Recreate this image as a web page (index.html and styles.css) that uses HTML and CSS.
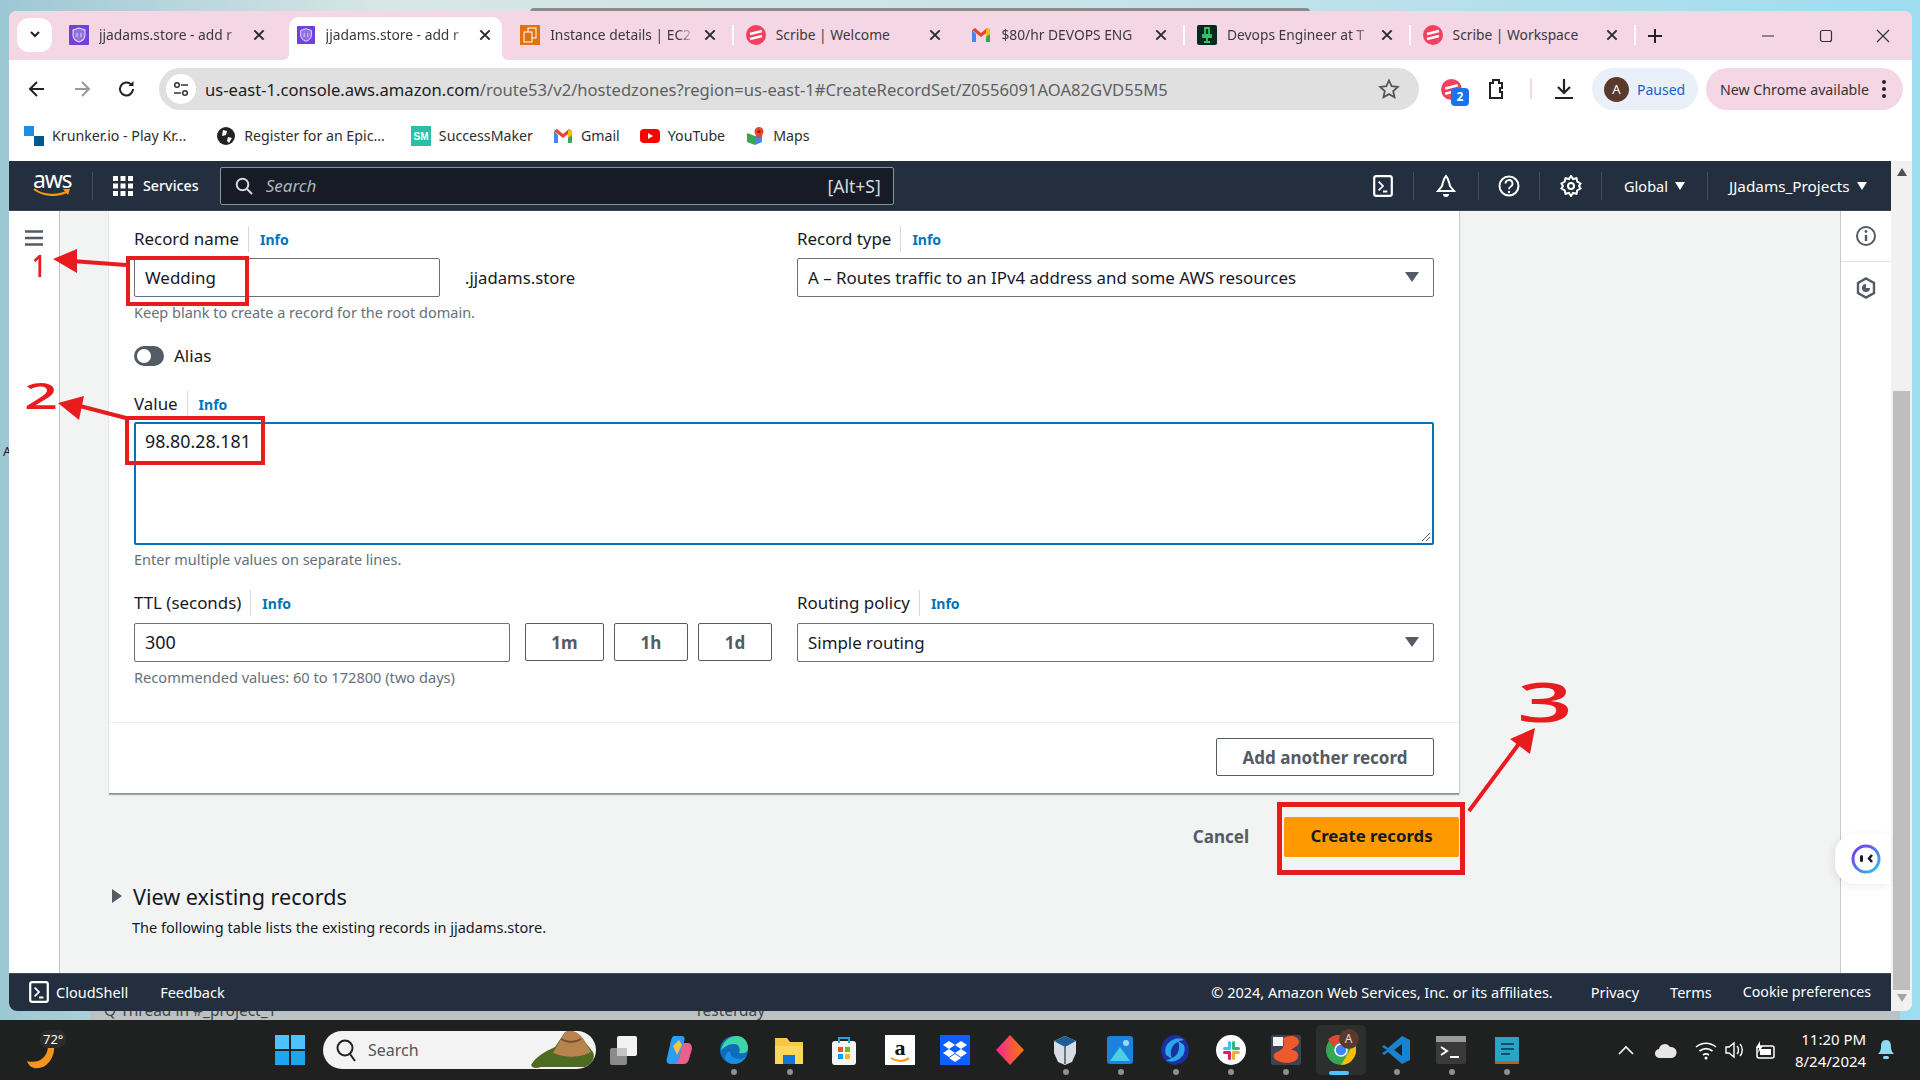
FILE: index.html
```html
<!DOCTYPE html>
<html>
<head>
    <title>Route 53 - Create record</title>
    <link rel="stylesheet" href="styles.css">
</head>
<body>
    <svg class="defs" width="0" height="0">
        <symbol id="route53" viewBox="0 0 20 20"><rect width="20" height="20" rx="1" fill="#6f42d8"/><path d="M10 3l6 2v5c0 4-3 6-6 7-3-1-6-3-6-7V5z" fill="#fff" fill-opacity="0.25" stroke="#e4d8fb" stroke-width="1.100"/><path d="M8 8v4M12 8v4" stroke="#e4d8fb" stroke-width="1"/></symbol>
        <symbol id="scribe" viewBox="0 0 20 20"><circle cx="10" cy="10" r="10" fill="#f43f5e"/><path d="M4 9l12-3M4 14l12-3" stroke="#fff" stroke-width="2.400"/></symbol>
        <symbol id="gmail" viewBox="0 0 20 20"><path d="M1 5v12h4V9z" fill="#4285f4"/><path d="M19 5v12h-4V9z" fill="#34a853"/><path d="M1 5l3-2 6 5 6-5 3 2-9 7z" fill="#ea4335"/><path d="M16 3l3 2v4l-4 3V5z" fill="#fbbc04"/></symbol>
        <symbol id="close" viewBox="0 0 12 12"><path d="M2 2l8 8M10 2l-8 8" stroke="#2b2b2b" stroke-width="1.700"/></symbol>
        <symbol id="caret" viewBox="0 0 10 8"><path d="M0 0h10L5 8z" fill="currentColor"/></symbol>
        <symbol id="shell" viewBox="0 0 20 20"><rect x="2" y="1" width="16" height="18" rx="2" fill="none" stroke="currentColor" stroke-width="2"/><path d="M6 6l4 4-4 4M10 15h4" fill="none" stroke="currentColor" stroke-width="1.600"/></symbol>
    </svg>

    <div class="behind behind-top"></div>
    <div class="behind behind-bottom"><span>Q Thread in #_project_1</span><span class="behind-date">Yesterday</span></div>
    <span class="edge-letter">A</span>

    <div class="desktop">
        <div class="window">
            <div class="tabstrip">
                <div class="tab-search"><svg width="14" height="10" viewBox="0 0 14 10"><path d="M3 2l4 4 4-4" fill="none" stroke="#222" stroke-width="2"/></svg></div>
                <div class="tab">
                    <svg class="favicon"><use href="#route53"/></svg>
                    <span class="tab-title fade">jjadams.store - add r</span>
                    <svg class="tab-close"><use href="#close"/></svg>
                </div>
                <div class="tab tab-active">
                    <svg class="favicon favicon-small"><use href="#route53"/></svg>
                    <span class="tab-title fade">jjadams.store - add r</span>
                    <svg class="tab-close"><use href="#close"/></svg>
                </div>
                <div class="tab tab-sep">
                    <svg class="favicon" viewBox="0 0 20 20"><rect width="20" height="20" fill="#e0720f"/><rect x="8" y="3" width="8" height="10" fill="none" stroke="#fff"/><rect x="4" y="7" width="8" height="10" fill="#e0720f" stroke="#fff"/></svg>
                    <span class="tab-title fade">Instance details | EC2</span>
                    <svg class="tab-close"><use href="#close"/></svg>
                </div>
                <div class="tab">
                    <svg class="favicon"><use href="#scribe"/></svg>
                    <span class="tab-title">Scribe | Welcome</span>
                    <svg class="tab-close"><use href="#close"/></svg>
                </div>
                <div class="tab tab-sep">
                    <svg class="favicon"><use href="#gmail"/></svg>
                    <span class="tab-title fade">$80/hr DEVOPS ENG</span>
                    <svg class="tab-close"><use href="#close"/></svg>
                </div>
                <div class="tab tab-sep">
                    <svg class="favicon" viewBox="0 0 20 20"><rect width="20" height="20" rx="2" fill="#06281f"/><path d="M8 3h4v7H8zM6 9v3h8V9M10 12v4M7 17h6" fill="none" stroke="#34c76a" stroke-width="1.800"/></svg>
                    <span class="tab-title fade">Devops Engineer at T</span>
                    <svg class="tab-close"><use href="#close"/></svg>
                </div>
                <div class="tab tab-sep">
                    <svg class="favicon"><use href="#scribe"/></svg>
                    <span class="tab-title">Scribe | Workspace</span>
                    <svg class="tab-close"><use href="#close"/></svg>
                </div>
                <svg class="new-tab" viewBox="0 0 16 16"><path d="M8 1v14M1 8h14" stroke="#222" stroke-width="2"/></svg>
                <div class="win-controls">
                    <div class="win-btn"><svg width="14" height="14" viewBox="0 0 14 14"><path d="M1 7h12" stroke="#333" stroke-width="1.200"/></svg></div>
                    <div class="win-btn"><svg width="14" height="14" viewBox="0 0 14 14"><rect x="1.500" y="1.500" width="11" height="11" rx="2" fill="none" stroke="#333" stroke-width="1.200"/></svg></div>
                    <div class="win-btn"><svg width="14" height="14" viewBox="0 0 14 14"><path d="M1 1l12 12M13 1L1 13" stroke="#333" stroke-width="1.200"/></svg></div>
                </div>
            </div>

            <div class="toolbar">
                <div class="nav-btn"><svg width="20" height="20" viewBox="0 0 20 20"><path d="M17 10H4M10 3l-7 7 7 7" fill="none" stroke="#222" stroke-width="2"/></svg></div>
                <div class="nav-btn"><svg width="20" height="20" viewBox="0 0 20 20"><path d="M3 10h13M10 3l7 7-7 7" fill="none" stroke="#9a9a9a" stroke-width="2"/></svg></div>
                <div class="nav-btn"><svg width="20" height="20" viewBox="0 0 20 20"><path d="M16 10a6.500 6.500 0 1 1-2-4.700" fill="none" stroke="#222" stroke-width="2"/><path d="M16.500 2v5h-5z" fill="#222"/></svg></div>
                <div class="omnibox">
                    <div class="site-info"><svg width="18" height="18" viewBox="0 0 18 18"><circle cx="5" cy="5" r="2.300" fill="none" stroke="#333" stroke-width="1.500"/><path d="M9 5h7M2 13h7" stroke="#333" stroke-width="1.500"/><circle cx="13" cy="13" r="2.300" fill="none" stroke="#333" stroke-width="1.500"/></svg></div>
                    <span class="url"><span class="url-host">us-east-1.console.aws.amazon.com</span>/route53/v2/hostedzones?region=us-east-1#CreateRecordSet/Z0556091AOA82GVD55M5</span>
                    <svg class="star" width="22" height="22" viewBox="0 0 22 22"><path d="M11 2.500l2.600 5.700 6.200.700-4.600 4.200 1.300 6.100-5.500-3.100-5.500 3.100 1.300-6.100-4.600-4.200 6.200-.700z" fill="none" stroke="#555" stroke-width="1.800"/></svg>
                </div>
                <div class="ext-scribe">
                    <svg width="21" height="21"><use href="#scribe"/></svg>
                    <span class="ext-badge">2</span>
                </div>
                <svg class="ext-puzzle" width="24" height="24" viewBox="0 0 24 24"><path d="M6 6h3V3h6v3h3v5h-2v4h2v6H6z" fill="none" stroke="#222" stroke-width="2"/></svg>
                <div class="tool-sep"></div>
                <svg class="ext-download" width="24" height="24" viewBox="0 0 24 24"><path d="M12 2v14M6 10l6 6 6-6M3 21h18" fill="none" stroke="#222" stroke-width="2.200"/></svg>
                <div class="profile-pill"><span class="avatar">A</span><span>Paused</span></div>
                <div class="update-pill"><span>New Chrome available</span><span class="kebab"><i></i><i></i><i></i></span></div>
            </div>

            <div class="bookmarks">
                <div class="bookmark bm-first"><svg class="bm-icon" viewBox="0 0 20 20"><rect width="10" height="10" fill="#1b8fe2"/><rect x="10" y="10" width="10" height="10" fill="#02588c"/></svg>Krunker.io - Play Kr...</div>
                <div class="bookmark bm-second"><svg class="bm-icon" viewBox="0 0 20 20"><circle cx="10" cy="10" r="9" fill="#222"/><path d="M7 4l4 1-1 4-4 1zM12 11l4 1-3 5-2-2z" fill="#fff"/></svg>Register for an Epic...</div>
                <div class="bookmark"><svg class="bm-icon" viewBox="0 0 20 20"><rect width="20" height="20" fill="#2bbfa8"/><text x="10" y="14" font-size="10" font-weight="700" fill="#fff" text-anchor="middle" font-family="Liberation Sans, sans-serif">SM</text></svg>SuccessMaker</div>
                <div class="bookmark"><svg class="bm-icon"><use href="#gmail"/></svg>Gmail</div>
                <div class="bookmark"><svg class="bm-icon" viewBox="0 0 20 20"><rect y="3" width="20" height="14" rx="4" fill="#f00"/><path d="M8 7l5 3-5 3z" fill="#fff"/></svg>YouTube</div>
                <div class="bookmark"><svg class="bm-icon" viewBox="0 0 20 20"><path d="M2 7l8 3v9l-8-3z" fill="#34a853"/><path d="M10 10l7-3v9l-7 3z" fill="#4285f4"/><path d="M14 1a4.500 4.500 0 0 1 4.500 4.500C18.500 8.500 14 13 14 13S9.500 8.500 9.500 5.500A4.500 4.500 0 0 1 14 1z" fill="#ea4335"/><circle cx="14" cy="5.500" r="1.600" fill="#8e1d14"/></svg>Maps</div>
            </div>

            <div class="page">
                <div class="console">
                    <div class="topnav">
                        <div class="aws-logo">
                            <span class="aws-word">aws</span>
                            <svg width="38" height="10" viewBox="0 0 38 10"><path d="M1 1c9 7 24 8 34 2" fill="none" stroke="#f90" stroke-width="2.200"/><path d="M30 1l7 0-2 6z" fill="#f90"/></svg>
                        </div>
                        <div class="nav-divider"></div>
                        <svg class="grid-icon" width="20" height="20" viewBox="0 0 20 20" fill="#fff"><rect width="5" height="5"/><rect x="7.500" width="5" height="5"/><rect x="15" width="5" height="5"/><rect y="7.500" width="5" height="5"/><rect x="7.500" y="7.500" width="5" height="5"/><rect x="15" y="7.500" width="5" height="5"/><rect y="15" width="5" height="5"/><rect x="7.500" y="15" width="5" height="5"/><rect x="15" y="15" width="5" height="5"/></svg>
                        <span class="services">Services</span>
                        <div class="nav-search">
                            <svg width="18" height="18" viewBox="0 0 18 18"><circle cx="7.500" cy="7.500" r="5.800" fill="none" stroke="#d5dbdb" stroke-width="2"/><path d="M12 12l5 5" stroke="#d5dbdb" stroke-width="2"/></svg>
                            <span class="nav-search-text">Search</span>
                            <span class="nav-search-key">[Alt+S]</span>
                        </div>
                        <div class="nav-right">
                            <div class="nav-cell cell-shell"><svg width="22" height="22"><use href="#shell"/></svg></div>
                            <div class="nav-cell cell-bell"><svg width="22" height="24" viewBox="0 0 22 24"><path d="M11 2c-3 3-3 7-4 10l-4 5h16l-4-5c-1-3-1-7-4-10z" fill="none" stroke="#fff" stroke-width="2"/><path d="M8 20a3 3 0 0 0 6 0z" fill="#fff"/></svg></div>
                            <div class="nav-cell cell-help"><svg width="22" height="22" viewBox="0 0 22 22"><circle cx="11" cy="11" r="9.500" fill="none" stroke="#fff" stroke-width="2"/><path d="M7.500 8.500a3.500 3.500 0 1 1 5 3.200c-1 .6-1.500 1-1.500 2.500" fill="none" stroke="#fff" stroke-width="1.800"/><circle cx="11" cy="17" r="1.200" fill="#fff"/></svg></div>
                            <div class="nav-cell cell-gear"><svg width="22" height="22" viewBox="0 0 22 22"><path d="M11 1l2 3 3.500-.8.800 3.500 3.200 1.800L19 11l1.500 2.500-3.200 1.800-.8 3.500L13 18l-2 3-2-3-3.500.8-.8-3.500-3.200-1.800L3 11 1.500 8.500l3.200-1.800.8-3.500L9 4z" fill="none" stroke="#fff" stroke-width="2"/><circle cx="11" cy="11" r="3" fill="none" stroke="#fff" stroke-width="2"/></svg></div>
                            <div class="nav-cell cell-global">Global<svg class="nav-caret"><use href="#caret"/></svg></div>
                            <div class="nav-cell cell-account">JJadams_Projects<svg class="nav-caret"><use href="#caret"/></svg></div>
                        </div>
                    </div>

                    <div class="console-body">
                        <aside class="side">
                            <svg width="18" height="16" viewBox="0 0 18 16"><path d="M0 1.500h18M0 8h18M0 14.500h18" stroke="#545b64" stroke-width="2.600"/></svg>
                        </aside>

                        <main class="main">
                            <section class="card">
                                <div class="card-body">
                                    <div class="form-row">
                                        <div>
                                            <div class="label-row"><label class="field-label">Record name</label><a class="info">Info</a></div>
                                            <div class="name-row">
                                                <div class="text-input name-input">Wedding</div>
                                                <span class="suffix">.jjadams.store</span>
                                            </div>
                                            <p class="hint">Keep blank to create a record for the root domain.</p>
                                        </div>
                                        <div>
                                            <div class="label-row"><label class="field-label">Record type</label><a class="info">Info</a></div>
                                            <div class="text-input select-input">A – Routes traffic to an IPv4 address and some AWS resources</div>
                                        </div>
                                    </div>

                                    <div class="alias-row">
                                        <span class="toggle"></span>
                                        <span class="alias-text">Alias</span>
                                    </div>

                                    <div class="label-row value-label"><label class="field-label">Value</label><a class="info">Info</a></div>
                                    <div class="value-box">98.80.28.181<svg class="resize-grip" width="10" height="10" viewBox="0 0 10 10"><path d="M1 9l8-8M5 9l4-4" stroke="#545b64" stroke-width="1"/></svg></div>
                                    <p class="hint hint-value">Enter multiple values on separate lines.</p>

                                    <div class="form-row ttl-row">
                                        <div>
                                            <div class="label-row ttl-label"><label class="field-label">TTL (seconds)</label><a class="info">Info</a></div>
                                            <div class="ttl-inputs">
                                                <div class="text-input ttl-input">300</div>
                                                <button class="ttl-btn btn-1m">1m</button>
                                                <button class="ttl-btn">1h</button>
                                                <button class="ttl-btn">1d</button>
                                            </div>
                                            <p class="hint hint-ttl">Recommended values: 60 to 172800 (two days)</p>
                                        </div>
                                        <div>
                                            <div class="label-row ttl-label"><label class="field-label">Routing policy</label><a class="info">Info</a></div>
                                            <div class="text-input select-input">Simple routing</div>
                                        </div>
                                    </div>
                                </div>
                                <div class="card-footer">
                                    <button class="btn-outline">Add another record</button>
                                </div>
                            </section>

                            <div class="actions">
                                <a class="cancel">Cancel</a>
                                <button class="btn-primary">Create records</button>
                            </div>

                            <div class="existing-head">
                                <svg width="12" height="14" viewBox="0 0 12 14"><path d="M1 0l10 7-10 7z" fill="#545b64"/></svg>
                                <h2>View existing records</h2>
                            </div>
                            <p class="existing-text">The following table lists the existing records in jjadams.store.</p>
                        </main>

                        <aside class="rail">
                            <div class="rail-item"><svg width="22" height="22" viewBox="0 0 22 22"><circle cx="11" cy="11" r="9" fill="none" stroke="#545b64" stroke-width="2"/><path d="M11 10v6" stroke="#545b64" stroke-width="2.400"/><circle cx="11" cy="6.500" r="1.400" fill="#545b64"/></svg></div>
                            <div class="rail-item"><svg width="20" height="22" viewBox="0 0 20 22"><path d="M10 1.500l8 4.500v10l-8 4.500L2 16V6z" fill="none" stroke="#545b64" stroke-width="2.400"/><path d="M10 7a4 4 0 1 0 4 4h-4z" fill="#545b64"/></svg></div>
                        </aside>
                    </div>

                    <footer class="console-footer">
                        <svg width="22" height="22"><use href="#shell"/></svg>
                        <span class="foot-shell">CloudShell</span>
                        <span class="foot-feedback">Feedback</span>
                        <span class="foot-copy">© 2024, Amazon Web Services, Inc. or its affiliates.</span>
                        <span class="foot-link foot-privacy">Privacy</span>
                        <span class="foot-link">Terms</span>
                        <span class="foot-link foot-cookie">Cookie preferences</span>
                    </footer>
                </div>

                <div class="scrollbar">
                    <svg class="scroll-up" width="10" height="8" viewBox="0 0 10 8"><path d="M5 0l5 8H0z" fill="#505050"/></svg>
                    <div class="scroll-thumb"></div>
                    <svg class="scroll-down" width="10" height="8" viewBox="0 0 10 8"><path d="M0 0h10L5 8z" fill="#a3a3a3"/></svg>
                </div>
            </div>
        </div>
    </div>

    <div class="taskbar">
        <div class="weather">
            <svg width="30" height="32" viewBox="0 0 30 32"><path d="M28 2c2 14-6 28-20 26-4-1-6-4-7-7 10 3 20-2 21-14z" fill="#f7941d"/></svg>
            <span class="temp">72°</span>
        </div>
        <svg class="start" width="30" height="30" viewBox="0 0 30 30"><rect width="14" height="14" fill="#4cc2ff"/><rect x="16" width="14" height="14" fill="#4cc2ff"/><rect y="16" width="14" height="14" fill="#1ea5ed"/><rect x="16" y="16" width="14" height="14" fill="#1ea5ed"/></svg>
        <div class="task-search">
            <svg width="22" height="24" viewBox="0 0 22 24"><circle cx="10" cy="10" r="7.500" fill="none" stroke="#222" stroke-width="2"/><path d="M15 16l5 7" stroke="#222" stroke-width="2"/></svg>
            <span>Search</span>
            <svg class="mountain" width="64" height="42" viewBox="0 0 64 42"><path d="M0 38c6-10 16-14 24-18L34 5c8-3 16 2 20 10l8 10c3 6-2 13-8 15H10C5 42 1 41 0 38z" fill="#4f6b22"/><path d="M22 26L34 5c8-3 16 2 20 10l6 10c-10 6-26 6-38 1z" fill="#b9834f"/><path d="M30 12c6 4 14 4 20 0" fill="none" stroke="#7a4f2a" stroke-width="2"/></svg>
        </div>
        <div class="task-icons">
            <div class="task-item"><svg viewBox="0 0 30 30"><rect x="8" y="1" width="20" height="20" rx="2" fill="#f2f2f2"/><rect x="1" y="13" width="17" height="17" rx="2" fill="#8a8a8a"/><rect x="8" y="13" width="10" height="8" fill="#c5c5c5"/></svg></div>
            <div class="task-item"><svg viewBox="0 0 30 30"><path d="M10 1h8c3 0 3 3 2 6l-6 20c-1 2-3 2-5 2H6c-3 0-4-3-3-6l3-13c1-5 2-9 4-9z" fill="#2a9df4"/><path d="M19 8h5c3 0 4 3 4 6l-3 10c-1 4-3 5-6 5h-8c2-1 3-3 4-6z" fill="#e9608e"/><path d="M9 11l6-6 3 5-5 10z" fill="#f6c445"/></svg></div>
            <div class="task-item has-dot"><svg viewBox="0 0 30 30"><circle cx="15" cy="15" r="14" fill="#0f6cbd"/><path d="M2 15C4 5 12 1 18 1c7 0 11 6 11 12 0 5-5 6-9 5 2-4 0-9-5-9-6 0-9 3-13 6z" fill="#3dd6a8"/><path d="M11 16c0 5 4 8 9 8 3 0 5-1 7-3-2 5-7 8-12 8-4 0-7-2-9-5 0-4 2-7 5-8z" fill="#1b8ee0"/></svg></div>
            <div class="task-item has-dot"><svg viewBox="0 0 30 30"><path d="M1 3h12l3 4h13v22H1z" fill="#f6c644"/><rect x="1" y="11" width="28" height="18" fill="#fbd75b"/><rect x="9" y="20" width="12" height="9" fill="#0f78d4"/></svg></div>
            <div class="task-item"><svg viewBox="0 0 30 30"><rect x="3" y="6" width="24" height="24" rx="3" fill="#f5f5f5"/><path d="M10 8V3h10v5" fill="none" stroke="#20a5e0" stroke-width="2"/><rect x="9" y="12" width="5" height="5" fill="#f25022"/><rect x="16" y="12" width="5" height="5" fill="#7fba00"/><rect x="9" y="19" width="5" height="5" fill="#00a4ef"/><rect x="16" y="19" width="5" height="5" fill="#ffb900"/></svg></div>
            <div class="task-item"><svg viewBox="0 0 30 30"><rect width="30" height="30" fill="#fff"/><text x="15" y="20" font-size="22" font-weight="700" fill="#111" text-anchor="middle" font-family="Liberation Serif, serif">a</text><path d="M6 23c6 4 13 4 18 0" fill="none" stroke="#f90" stroke-width="2"/></svg></div>
            <div class="task-item"><svg viewBox="0 0 30 30"><rect width="30" height="30" fill="#0d5fff"/><path d="M9 6l6 4-6 4-6-4zM21 6l6 4-6 4-6-4zM9 14l6 4-6 4-6-4zM21 14l6 4-6 4-6-4zM15 19l6 4-6 4-6-4z" fill="#fff"/></svg></div>
            <div class="task-item"><svg viewBox="0 0 30 30"><defs><linearGradient id="dia" x1="0" x2="1"><stop offset="0" stop-color="#f0259a"/><stop offset="1" stop-color="#ff7a00"/></linearGradient></defs><path d="M15 0l14 15-14 15L1 15z" fill="url(#dia)"/></svg></div>
            <div class="task-item has-dot"><svg viewBox="0 0 30 30"><path d="M15 1l11 5v12l-4 9-7 3-7-3-4-9V6z" fill="#d7dde3"/><path d="M15 1l11 5-11 6L4 6z" fill="#1d5d94"/><path d="M15 12v17" stroke="#6a7884" stroke-width="2"/></svg></div>
            <div class="task-item has-dot"><svg viewBox="0 0 30 30"><rect x="2" y="1" width="26" height="28" rx="3" fill="#1d82dc"/><path d="M5 26l10-14 10 14z" fill="#49d0e6"/><circle cx="21" cy="8" r="3" fill="#9ad8ff"/></svg></div>
            <div class="task-item has-dot"><svg viewBox="0 0 30 30"><ellipse cx="15" cy="15" rx="14" ry="15" fill="#1c2fa0"/><path d="M6 20C2 8 16 0 24 5 16 6 8 12 12 24zM24 10c4 12-10 20-18 15 8-1 16-7 12-19z" fill="#28a8ea"/></svg></div>
            <div class="task-item has-dot"><svg viewBox="0 0 30 30"><circle cx="15" cy="15" r="15" fill="#fff"/><rect x="7" y="12" width="8" height="3" rx="1.500" fill="#36c5f0"/><rect x="12" y="6" width="3" height="8" rx="1.500" fill="#36c5f0"/><rect x="16" y="12" width="8" height="3" rx="1.500" fill="#2eb67d"/><rect x="16" y="6" width="3" height="8" rx="1.500" fill="#2eb67d"/><rect x="16" y="16" width="8" height="3" rx="1.500" fill="#ecb22e"/><rect x="16" y="17" width="3" height="8" rx="1.500" fill="#ecb22e"/><rect x="7" y="16" width="8" height="3" rx="1.500" fill="#e01e5a"/><rect x="12" y="17" width="3" height="8" rx="1.500" fill="#e01e5a"/></svg></div>
            <div class="task-item has-dot"><svg viewBox="0 0 30 30"><rect x="0" y="0" width="30" height="30" rx="2" fill="#3c4352"/><path d="M12 3c8-4 16-2 16 4 0 4-6 6-8 8 4 0 8 2 7 7-1 6-14 8-22 3-4-3-3-7 3-9 4-2 6-5 4-13z" fill="#ee5a2c"/><rect x="2" y="2" width="10" height="9" fill="#f2f2f2"/></svg></div>
            <div class="task-item task-active"><svg viewBox="0 0 30 30"><circle cx="15" cy="15" r="15" fill="#34a853"/><path d="M15 0a15 15 0 0 1 13 7.500H15a7.500 7.500 0 0 0-7 5L2 4.500A15 15 0 0 1 15 0z" fill="#ea4335"/><path d="M28 7.500a15 15 0 0 1-13 22.500l6.500-11a7.500 7.500 0 0 0 0-11.500z" fill="#fbbc04"/><circle cx="15" cy="15" r="6" fill="#4285f4" stroke="#fff" stroke-width="1.500"/></svg><span class="chrome-badge">A</span></div>
            <div class="task-item has-dot"><svg viewBox="0 0 30 30"><path d="M21 1l8 4v20l-8 4L7 17l-4 3-2-2 5-3-5-3 2-2 4 3zM21 9l-8 6 8 6z" fill="#1684d0"/></svg></div>
            <div class="task-item has-dot"><svg viewBox="0 0 30 30"><rect y="1" width="30" height="28" rx="2" fill="#3a3a3a"/><rect y="1" width="30" height="6" fill="#9a9a9a"/><path d="M5 12l6 4-6 4" fill="none" stroke="#fff" stroke-width="2"/><path d="M14 22h9" stroke="#fff" stroke-width="2"/></svg></div>
            <div class="task-item has-dot"><svg viewBox="0 0 30 30"><rect x="3" y="2" width="24" height="26" fill="#27a5c8"/><rect x="3" y="26" width="24" height="3" fill="#b4622a"/><path d="M9 9h13M9 14h13M9 19h9" stroke="#0e4f66" stroke-width="2"/></svg></div>
        </div>
        <div class="tray">
            <svg width="16" height="10" viewBox="0 0 16 10"><path d="M1 9l7-7 7 7" fill="none" stroke="#fff" stroke-width="1.600"/></svg>
            <svg class="tray-cloud" width="22" height="18" viewBox="0 0 22 18"><path d="M5 17a4.500 4.500 0 0 1-1-9 6 6 0 0 1 11-2 5.500 5.500 0 0 1 2 11z" fill="#e6e6e6"/></svg>
            <svg class="tray-wifi" width="22" height="20" viewBox="0 0 22 20"><path d="M1 7c6-5 14-5 20 0M4.500 11c4-3 9-3 13 0M8 15c2-1.500 4-1.500 6 0" fill="none" stroke="#fff" stroke-width="1.600"/><circle cx="11" cy="18" r="1.500" fill="#fff"/></svg>
            <svg class="tray-vol" width="22" height="20" viewBox="0 0 22 20"><path d="M2 7h3l5-4v14l-5-4H2z" fill="none" stroke="#fff" stroke-width="1.400"/><path d="M13 6c2 2 2 6 0 8M16 4c3 3 3 9 0 12" fill="none" stroke="#fff" stroke-width="1.400"/></svg>
            <svg class="tray-batt" width="22" height="20" viewBox="0 0 22 20"><rect x="3" y="6" width="17" height="12" rx="2" fill="none" stroke="#fff" stroke-width="1.500"/><rect x="6" y="9" width="11" height="6" fill="#fff"/><path d="M6 1L2 8h3l-1 5 5-7H6z" fill="#fff"/></svg>
            <div class="clock"><span>11:20 PM</span><span>8/24/2024</span></div>
            <svg class="tray-bell" width="18" height="22" viewBox="0 0 18 22"><path d="M9 1c-4 0-5 3-5 7 0 3-1 5-3 7h16c-2-2-3-4-3-7 0-4-1-7-5-7z" fill="#8fdcf2"/><rect x="6" y="17" width="6" height="3" rx="1.500" fill="#8fdcf2"/></svg>
        </div>
    </div>

    <!-- red annotations drawn on top of the screenshot -->
    <svg class="marks" viewBox="0 0 1920 1080">
        <g fill="none" stroke="#e81c1f">
            <rect x="128" y="258" width="119" height="46" stroke-width="4"/>
            <rect x="127" y="418" width="136" height="45" stroke-width="4"/>
            <rect x="1279.500" y="804.500" width="183" height="68" stroke-width="5"/>
            <path d="M126 265l-54-4M126 418l-50-13M1469 811l52-70" stroke-width="4"/>
        </g>
        <g fill="#e81c1f">
            <path d="M53 259l24-10v24z"/>
            <path d="M58 403l26-7-5 24z"/>
            <path d="M1535 728l-25 11 20 15z"/>
        </g>
    </svg>
    <span class="digit digit-1">1</span>
    <span class="digit digit-2">2</span>
    <span class="digit digit-3">3</span>

    <div class="helper-tab">
        <svg width="30" height="30" viewBox="0 0 30 30"><defs><linearGradient id="ring" x1="0" y1="0" x2="1" y2="1"><stop offset="0" stop-color="#7b2ff7"/><stop offset="1" stop-color="#2bc4e8"/></linearGradient></defs><circle cx="15" cy="15" r="13" fill="#fff" stroke="url(#ring)" stroke-width="3"/><rect x="9" y="11" width="3" height="7" rx="1.500" fill="#16191f"/><path d="M21 11l-3 3.500 3 3.500" fill="none" stroke="#16191f" stroke-width="2.500"/></svg>
    </div>
</body>
</html>
```

FILE: styles.css
```css
* {
    box-sizing: border-box;
}
body {
    margin: 0;
    width: 1920px;
    height: 1080px;
    overflow: hidden;
    position: relative;
    font-family: "Noto Sans", sans-serif;
    color: #16191f;
    background: linear-gradient(90deg, #9cc8d4 0%, #d8e6e6 20%, #c6e2e8 60%, #9edcf0 100%);
}
.defs {
    position: absolute;
}
p {
    margin: 0;
}

/* desktop */
.desktop {
    height: 1020px;
    padding: 11px 8px 9px 9px;
    position: relative;
}
.behind {
    position: absolute;
    background: #bcc2c4;
}
.behind-top {
    left: 530px;
    top: 8px;
    width: 780px;
    height: 4px;
    background: #8c8c8c;
    border-radius: 4px 4px 0 0;
}
.behind-bottom {
    left: 90px;
    top: 1000px;
    width: 1810px;
    height: 20px;
    padding: 0 0 0 14px;
    font-size: 15.5px;
    line-height: 20px;
    color: #444;
    overflow: hidden;
}
.behind-date {
    margin-left: 418px;
}
.edge-letter {
    position: absolute;
    left: 3px;
    top: 442px;
    font-size: 13px;
    width: 6px;
    overflow: hidden;
}
.window {
    height: 1000px;
    display: flex;
    flex-direction: column;
    position: relative;
    background: #fff;
    border-radius: 8px;
    overflow: hidden;
}

/* tabs */
.tabstrip {
    height: 49px;
    flex: none;
    display: flex;
    align-items: flex-end;
    background: #f5d6e5;
}
.tab-search {
    width: 35px;
    height: 34px;
    margin: 0 7px 8px 8px;
    background: #fff;
    border-radius: 12px;
    display: flex;
    align-items: center;
    justify-content: center;
}
.tab {
    width: 225.6px;
    height: 43px;
    flex: none;
    display: flex;
    align-items: center;
    padding: 0 19px 8px 10px;
    position: relative;
}
.tab-sep::after {
    content: "";
    position: absolute;
    right: 2px;
    top: 8px;
    height: 20px;
    width: 2px;
    background: #fff;
}
.tab-active {
    width: 213px;
    margin: 0 8.6px 0 4px;
    padding: 0 10px 8px 8px;
    background: #fff;
    border-radius: 10px 10px 0 0;
}
.tab-active::before,
.tab-active::after {
    content: "";
    position: absolute;
    bottom: 0;
    width: 6px;
    height: 6px;
}
.tab-active::before {
    left: -6px;
    background: radial-gradient(circle at 0 0, transparent 6px, #fff 6px);
}
.tab-active::after {
    right: -6px;
    background: radial-gradient(circle at 100% 0, transparent 6px, #fff 6px);
}
.favicon {
    width: 20px;
    height: 20px;
    flex: none;
    margin-right: 10px;
}
.favicon-small {
    width: 18px;
    height: 20px;
    margin-right: 11px;
}
.tab-title {
    flex: 1;
    min-width: 0;
    margin-right: 8px;
    font-size: 13.8px;
    color: #3a3a3a;
    white-space: nowrap;
    overflow: hidden;
}
.fade {
    -webkit-mask-image: linear-gradient(90deg, #000 88%, transparent 100%);
    mask-image: linear-gradient(90deg, #000 88%, transparent 100%);
}
.tab-close {
    width: 14px;
    height: 14px;
    flex: none;
}
.new-tab {
    width: 16px;
    height: 16px;
    margin: 0 0 16px 9px;
    flex: none;
}
.win-controls {
    margin-left: auto;
    height: 100%;
    display: flex;
}
.win-btn {
    width: 57.5px;
    display: flex;
    align-items: center;
    justify-content: center;
}

/* toolbar */
.toolbar {
    height: 58px;
    flex: none;
    display: flex;
    align-items: center;
    padding: 0 0 0 5px;
}
.nav-btn {
    width: 45px;
    display: flex;
    justify-content: center;
}
.omnibox {
    width: 1260px;
    height: 42px;
    margin-left: 10px;
    background: #e0e0e0;
    border-radius: 21px;
    display: flex;
    align-items: center;
    padding: 0 19px 0 7px;
}
.site-info {
    width: 30px;
    height: 30px;
    background: #fff;
    border-radius: 50%;
    display: flex;
    align-items: center;
    justify-content: center;
    flex: none;
}
.url {
    margin-left: 9px;
    font-size: 16.6px;
    color: #5f5f5f;
    white-space: nowrap;
}
.url-host {
    color: #202020;
}
.star {
    margin-left: auto;
    flex: none;
}
.ext-scribe {
    position: relative;
    width: 28px;
    height: 30px;
    margin-left: 22px;
}
.ext-scribe svg {
    display: block;
    margin-top: 5px;
}
.ext-badge {
    position: absolute;
    right: 0;
    bottom: -2px;
    width: 18px;
    height: 18px;
    background: #1a73e8;
    color: #fff;
    border-radius: 4px;
    font-size: 12px;
    font-weight: 700;
    line-height: 18px;
    text-align: center;
}
.ext-puzzle {
    margin-left: 15px;
}
.tool-sep {
    width: 2px;
    height: 20px;
    margin-left: 22px;
    background: #f5d6e5;
}
.ext-download {
    margin-left: 20px;
}
.profile-pill {
    width: 106px;
    height: 42px;
    margin-left: 16px;
    padding-left: 12px;
    display: flex;
    align-items: center;
    gap: 8px;
    background: #e9f0f9;
    border-radius: 21px;
    font-size: 14px;
    color: #1a5fc8;
}
.avatar {
    width: 25px;
    height: 25px;
    background: #5b3a2e;
    color: #fff;
    border-radius: 50%;
    font-size: 13px;
    line-height: 25px;
    text-align: center;
}
.update-pill {
    width: 197px;
    height: 42px;
    margin-left: 8px;
    padding-left: 14px;
    display: flex;
    align-items: center;
    background: #f5d6e5;
    border-radius: 21px;
    font-size: 14.2px;
    color: #333;
    white-space: nowrap;
}
.kebab {
    margin-left: auto;
    margin-right: 17px;
    display: flex;
    flex-direction: column;
    gap: 3px;
}
.kebab i {
    width: 4px;
    height: 4px;
    background: #222;
    border-radius: 50%;
}

/* bookmarks */
.bookmarks {
    height: 43px;
    flex: none;
    display: flex;
    align-items: center;
    padding: 0 0 8px 15px;
    font-size: 14.2px;
    color: #2e2e2e;
}
.bookmark {
    display: flex;
    align-items: center;
    gap: 8px;
    white-space: nowrap;
    margin-right: 20px;
}
.bm-first {
    margin-right: 30px;
}
.bm-second {
    margin-right: 26px;
}
.bm-icon {
    width: 20px;
    height: 20px;
    flex: none;
}

/* console */
.page {
    flex: 1;
    min-height: 0;
    display: flex;
}
.console {
    flex: 1;
    min-width: 0;
    display: flex;
    flex-direction: column;
}
.topnav {
    height: 50px;
    flex: none;
    display: flex;
    align-items: center;
    padding-left: 24px;
    background: #232f3e;
    color: #fff;
    border-bottom: 1px solid #3b4552;
}
.aws-logo {
    width: 38px;
    margin-top: -4px;
    display: flex;
    flex-direction: column;
    line-height: 18px;
}
.aws-word {
    font-size: 23px;
    letter-spacing: -1.2px;
}
.nav-divider {
    width: 1px;
    height: 28px;
    margin-left: 21px;
    background: #414d5c;
}
.grid-icon {
    margin-left: 20px;
}
.services {
    margin-left: 10px;
    font-size: 14.3px;
    font-weight: 500;
}
.nav-search {
    width: 674px;
    height: 38px;
    margin-left: 21px;
    padding: 0 12px 0 14px;
    display: flex;
    align-items: center;
    background: #161b26;
    border: 1px solid #879596;
    border-radius: 2px;
}
.nav-search-text {
    margin-left: 13px;
    font-size: 17px;
    font-style: italic;
    color: #aab7b8;
}
.nav-search-key {
    margin-left: auto;
    font-size: 17.5px;
    color: #d5dbdb;
}
.nav-right {
    margin-left: auto;
    height: 100%;
    display: flex;
    align-items: center;
    font-size: 14.5px;
}
.nav-cell {
    height: 28px;
    display: flex;
    align-items: center;
    justify-content: center;
    border-right: 1px solid #414d5c;
}
.cell-shell { width: 61px; }
.cell-bell { width: 65px; }
.cell-help { width: 61px; }
.cell-gear { width: 62px; }
.cell-global { width: 106px; }
.cell-account {
    width: 183px;
    justify-content: flex-start;
    padding-left: 21px;
    border-right: none;
    font-size: 15.3px;
}
.nav-caret {
    width: 10px;
    height: 8px;
    margin-left: 7px;
    color: #fff;
}
.console-body {
    flex: 1;
    min-height: 0;
    display: flex;
}
.side {
    width: 51px;
    flex: none;
    padding: 18px 0 0 16px;
    background: #fff;
    border-right: 1px solid #bdc3c7;
}
.main {
    flex: 1;
    min-width: 0;
    padding-left: 49px;
    background: #f2f3f3;
    overflow: hidden;
}
.rail {
    width: 51px;
    flex: none;
    background: #fff;
    border-left: 1px solid #c6cacc;
}
.rail-item {
    height: 51px;
    display: flex;
    align-items: center;
    justify-content: center;
    border-bottom: 1px solid #dfe2e2;
}
.rail-item + .rail-item {
    border-bottom: none;
}

/* form card */
.card {
    width: 1350px;
    background: #fff;
    border-bottom: 1px solid #879596;
    box-shadow: 0 1px 1px rgba(0, 28, 36, 0.3), 1px 0 1px rgba(0, 28, 36, 0.12);
}
.card-body {
    padding: 18px 25px 36px 25px;
    border-bottom: 1px solid #eaeded;
}
.form-row {
    display: grid;
    grid-template-columns: 638px 637px;
    column-gap: 25px;
}
.label-row {
    height: 20px;
    margin-bottom: 9px;
    display: flex;
    align-items: center;
}
.field-label {
    padding-right: 9px;
    border-right: 1px solid #d5dbdb;
    font-size: 16.9px;
    line-height: 26px;
}
.info {
    margin-left: 11px;
    font-size: 14px;
    font-weight: 700;
    color: #0073bb;
}
.name-row {
    display: flex;
    align-items: center;
}
.text-input {
    height: 39px;
    padding: 0 10px 1px;
    display: flex;
    align-items: center;
    border: 1px solid #687078;
    border-radius: 2px;
    background: #fff;
    font-size: 16.9px;
}
.name-input {
    width: 306px;
}
.suffix {
    margin-left: 25px;
    font-size: 16.7px;
}
.select-input {
    position: relative;
}
.select-input::after {
    content: "";
    position: absolute;
    right: 14px;
    top: 13px;
    border-style: solid;
    border-width: 10px 7px 0;
    border-color: #545b64 transparent transparent;
}
.hint {
    margin-top: 6px;
    font-size: 14.5px;
    line-height: 18px;
    color: #687078;
}
.alias-row {
    height: 22px;
    margin-top: 24px;
    display: flex;
    align-items: center;
}
.toggle {
    width: 30px;
    height: 20px;
    padding: 3px;
    background: #545b64;
    border-radius: 10px;
}
.toggle::before {
    content: "";
    display: block;
    width: 14px;
    height: 14px;
    background: #fff;
    border-radius: 50%;
}
.alias-text {
    margin-left: 10px;
    margin-bottom: 1px;
    font-size: 17px;
}
.value-label {
    margin-top: 27px;
    margin-bottom: 8px;
}
.value-box {
    height: 123px;
    padding: 5px 9px;
    position: relative;
    border: 2px solid #0073bb;
    border-radius: 2px;
    font-size: 17.8px;
}
.resize-grip {
    position: absolute;
    right: 1px;
    bottom: 1px;
}
.hint-value {
    margin-top: 5px;
}
.ttl-row {
    margin-top: 25px;
}
.ttl-label {
    margin-bottom: 10px;
}
.ttl-inputs {
    display: flex;
    gap: 10px;
}
.ttl-input {
    width: 376px;
    font-size: 18px;
}
.ttl-btn {
    width: 74px;
    height: 38px;
    padding: 0;
    background: #fff;
    border: 1px solid #545b64;
    border-radius: 2px;
    font-family: inherit;
    font-size: 17px;
    font-weight: 700;
    color: #545b64;
}
.btn-1m {
    width: 79px;
    margin-left: 5px;
}
.hint-ttl {
    margin-top: 6px;
    font-size: 14.6px;
}
.card-footer {
    height: 70px;
    padding: 15px 25px 0 0;
    display: flex;
    justify-content: flex-end;
    align-items: flex-start;
}
.btn-outline {
    width: 218px;
    height: 38px;
    padding: 0;
    background: #fff;
    border: 1px solid #545b64;
    border-radius: 2px;
    font-family: inherit;
    font-size: 17px;
    font-weight: 700;
    color: #545b64;
}
.actions {
    width: 1350px;
    margin-top: 23px;
    display: flex;
    justify-content: flex-end;
    align-items: center;
}
.cancel {
    margin-right: 35px;
    padding-bottom: 2px;
    font-size: 17px;
    font-weight: 700;
    color: #545b64;
}
.btn-primary {
    width: 175px;
    height: 40px;
    padding: 0 0 3px;
    background: #f90;
    border: none;
    border-radius: 2px;
    font-family: inherit;
    font-size: 16.8px;
    font-weight: 700;
    color: #16191f;
}
.existing-head {
    height: 30px;
    margin: 24px 0 0 2px;
    display: flex;
    align-items: center;
    gap: 10px;
}
.existing-head h2 {
    margin: 0;
    font-size: 21.6px;
    font-weight: 400;
}
.existing-text {
    margin: 7px 0 0 23px;
    font-size: 14.5px;
    line-height: 18px;
}
.console-footer {
    height: 38px;
    flex: none;
    display: flex;
    align-items: center;
    padding: 0 20px 2px 19px;
    background: #232f3e;
    border-top: 1px solid #414d5c;
    color: #fff;
    font-size: 14.5px;
}
.foot-shell {
    margin-left: 6px;
}
.foot-feedback {
    margin-left: 32px;
}
.foot-copy {
    margin-left: auto;
}
.foot-link {
    margin-left: 31px;
}
.foot-privacy {
    margin-left: 38px;
}
.foot-cookie {
    font-size: 14.2px;
}
.scrollbar {
    width: 21px;
    flex: none;
    display: flex;
    flex-direction: column;
    align-items: center;
    background: #f1f1f1;
}
.scroll-up {
    margin-top: 7px;
}
.scroll-thumb {
    width: 17px;
    height: 599px;
    margin-top: 215px;
    background: #bebebe;
}
.scroll-down {
    margin-top: 4px;
}

/* taskbar */
.taskbar {
    height: 60px;
    display: flex;
    align-items: center;
    background: #1f2020;
    color: #fff;
    position: relative;
}
.weather {
    width: 30px;
    height: 40px;
    margin-left: 26px;
    position: relative;
    padding-top: 10px;
}
.temp {
    position: absolute;
    left: 14px;
    top: 0;
    padding: 0 3px;
    background: #2c2c2c;
    border-radius: 8px;
    font-size: 13px;
    line-height: 18px;
}
.start {
    margin-left: 219px;
}
.task-search {
    width: 273px;
    height: 38px;
    margin-left: 18px;
    padding-left: 12px;
    display: flex;
    align-items: center;
    background: #f3f3f3;
    border-radius: 19px;
    color: #555;
    font-size: 16px;
    position: relative;
}
.task-search span {
    margin-left: 11px;
}
.mountain {
    position: absolute;
    right: 1px;
    bottom: 0;
}
.task-icons {
    display: flex;
}
.task-item {
    width: 55.2px;
    height: 60px;
    display: flex;
    align-items: center;
    justify-content: center;
    position: relative;
}
.task-item svg {
    width: 30px;
    height: 30px;
}
.has-dot::after {
    content: "";
    position: absolute;
    bottom: 5px;
    left: 25px;
    width: 6px;
    height: 6px;
    background: #8f8f8f;
    border-radius: 50%;
}
.task-active::before {
    content: "";
    position: absolute;
    left: 3px;
    right: 3px;
    top: 5px;
    bottom: 5px;
    background: #2d2e2e;
    border-radius: 5px;
}
.task-active svg {
    position: relative;
}
.task-active::after {
    content: "";
    position: absolute;
    bottom: 5px;
    left: 16px;
    width: 20px;
    height: 4px;
    background: #4cc2ff;
    border-radius: 2px;
}
.chrome-badge {
    position: absolute;
    right: 10px;
    top: 9px;
    width: 20px;
    height: 20px;
    background: #5b3a2e;
    border-radius: 50%;
    font-size: 12px;
    line-height: 20px;
    text-align: center;
    color: #e8d8d0;
}
.tray {
    margin-left: 84px;
    display: flex;
    align-items: center;
}
.tray-cloud { margin-left: 21px; }
.tray-wifi { margin-left: 18px; }
.tray-vol { margin-left: 7px; }
.tray-batt { margin-left: 8px; }
.clock {
    width: 90px;
    display: flex;
    flex-direction: column;
    align-items: flex-end;
    font-size: 15px;
    line-height: 22px;
}
.tray-bell {
    margin-left: 11px;
}

/* things lying over the page */
.marks {
    position: absolute;
    left: 0;
    top: 0;
    width: 1920px;
    height: 1080px;
    pointer-events: none;
}
.digit {
    position: absolute;
    font-family: "Open Sans", sans-serif;
    font-weight: 600;
    color: #e81c1f;
    line-height: 1;
}
.digit-1 {
    left: 32px;
    top: 251px;
    font-size: 30px;
    transform: scaleX(0.8);
    transform-origin: left top;
}
.digit-2 {
    left: 24px;
    top: 378px;
    font-size: 36px;
    transform: scaleX(1.65);
    transform-origin: left top;
}
.digit-3 {
    left: 1517px;
    top: 673px;
    font-size: 55px;
    transform: scaleX(1.78);
    transform-origin: left top;
}
.helper-tab {
    position: absolute;
    left: 1835px;
    top: 834px;
    width: 56px;
    height: 50px;
    display: flex;
    align-items: center;
    padding-left: 16px;
    background: #fff;
    border-radius: 20px 0 0 20px;
    box-shadow: -2px 2px 8px rgba(0, 0, 0, 0.08);
}
```
